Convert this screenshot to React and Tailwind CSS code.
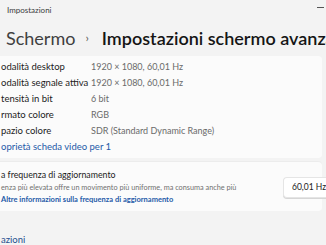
export default function App() {
    const rows = [
        ['odalità desktop', '1920 × 1080, 60,01 Hz'],
        ['odalità segnale attiva', '1920 × 1080, 60,01 Hz'],
        ['tensità in bit', '6 bit'],
        ['rmato colore', 'RGB'],
        ['pazio colore', 'SDR (Standard Dynamic Range)'],
    ];

    return (
        <div
            className="w-[326px] h-[245px] overflow-hidden bg-[#f3f3f3] text-[#1b1b1b]"
            style={{ fontFamily: 'Lato, "Noto Sans", sans-serif' }}
        >
            <div className="flex h-[20px] items-center justify-between pl-[7px] pr-[2px]">
                <span className="text-[8px] text-[#3b3b3b]">Impostazioni</span>
                <span className="mb-[6px] h-px w-[7px] bg-[#555]" />
            </div>

            <div className="flex h-[36px] items-center whitespace-nowrap pl-[6px] text-[18px] leading-none">
                <span className="text-[#404040]">Schermo</span>
                <span className="mr-[13px] ml-[10px] text-[12px] text-[#5a5a5a]">›</span>
                <span className="font-semibold text-[#151515]">Impostazioni schermo avanzate</span>
            </div>

            <div className="mr-[4px] rounded-r-[4px] bg-[#fbfbfb] pt-[3px] pb-[3px]">
                {rows.map(([label, value]) => (
                    <div key={label} className="flex h-[16px] items-center whitespace-nowrap">
                        <span className="w-[91px] pl-[1px] text-[9.5px] text-[#1b1b1b]">{label}</span>
                        <span className="text-[9px] text-[#6a6a6a]">{value}</span>
                    </div>
                ))}
                <div className="flex h-[16px] items-center pl-[1px] text-[9.5px] text-[#1e5aa8]">
                    oprietà scheda video per 1
                </div>
            </div>

            <div className="mt-[3px] mr-[4px] flex items-center justify-between rounded-r-[4px] border-t border-[#ececec] bg-[#fbfbfb] pt-[6px] pb-[5px]">
                <div className="flex flex-col whitespace-nowrap pl-[1px]">
                    <span className="text-[8.8px] leading-[14px] text-[#1b1b1b]">a frequenza di aggiornamento</span>
                    <span className="text-[7.3px] leading-[12px] text-[#707070]">
                        enza più elevata offre un movimento più uniforme, ma consuma anche più
                    </span>
                    <span className="text-[7.5px] font-bold leading-[12px] text-[#1e5aa8]">
                        Altre informazioni sulla frequenza di aggiornamento
                    </span>
                </div>
                <div className="-mr-[4px] flex h-[21px] w-[43px] shrink-0 items-center rounded-l-[4px] border border-r-0 border-[#e5e5e5] bg-white pl-[8px] text-[8.5px] whitespace-nowrap text-[#1b1b1b] shadow-[0_1px_0_#d6d6d6]">
                    60,01 Hz
                </div>
            </div>

            <div className="pt-[22px] pl-[1px] text-[9.5px] text-[#1e4f8f]">azioni</div>
        </div>
    );
}
